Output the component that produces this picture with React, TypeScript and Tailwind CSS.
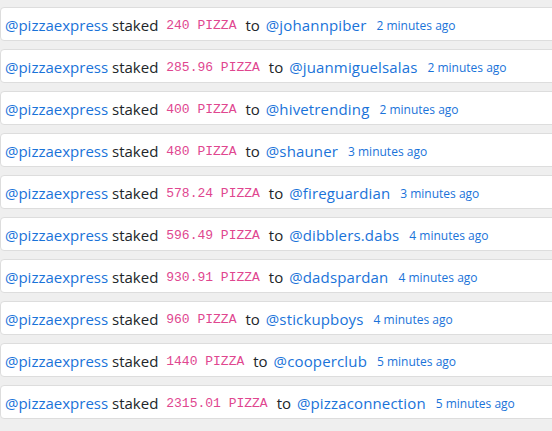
import React from "react";

const rows = [
  ["240", "johannpiber", "2 minutes ago"],
  ["285.96", "juanmiguelsalas", "2 minutes ago"],
  ["400", "hivetrending", "2 minutes ago"],
  ["480", "shauner", "3 minutes ago"],
  ["578.24", "fireguardian", "3 minutes ago"],
  ["596.49", "dibblers.dabs", "4 minutes ago"],
  ["930.91", "dadspardan", "4 minutes ago"],
  ["960", "stickupboys", "4 minutes ago"],
  ["1440", "cooperclub", "5 minutes ago"],
  ["2315.01", "pizzaconnection", "5 minutes ago"],
];

export default function App() {
  return (
    <div
      className="w-[552px] h-[431px] overflow-hidden bg-[#efefef] pt-[7px] flex flex-col gap-2"
      style={{ fontFamily: '"Open Sans", "Noto Sans", sans-serif' }}
    >
      {rows.map(([amt, user, time]) => (
        <div
          key={user}
          className="w-[570px] h-[34px] shrink-0 bg-white border border-[#dddddd] rounded-[4px] flex items-center pl-[4px] pt-[3px] text-[15px] text-[#212529] whitespace-pre"
        >
          <span className="text-[#1a73d9]">@pizzaexpress</span>
          <span> staked </span>
          <span
            className="text-[13px] text-[#e0468f] pl-[4px] pr-[9px]"
            style={{ fontFamily: '"Liberation Mono", monospace' }}
          >
            {amt} PIZZA
          </span>
          <span>to </span>
          <span className="text-[#1a73d9] tracking-[0.15px] ml-[2px]">@{user}</span>
          <span className="text-[12px] text-[#1a73d9] ml-[10px]">{time}</span>
        </div>
      ))}
    </div>
  );
}
